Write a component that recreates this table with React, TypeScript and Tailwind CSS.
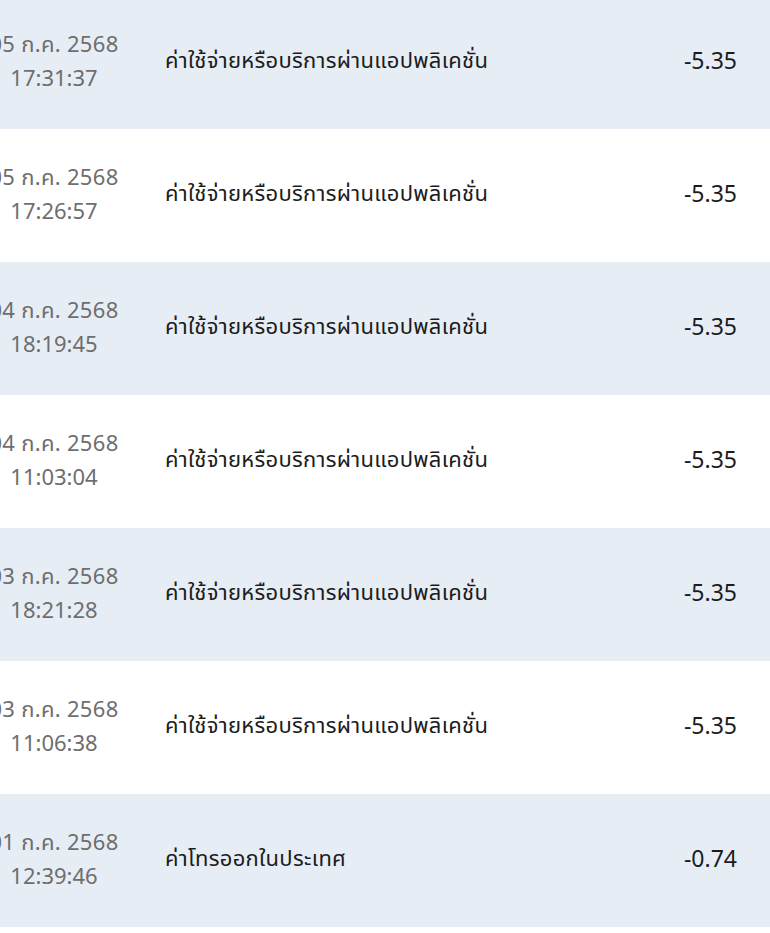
import React from "react";

const rows = [
  { d: "05 ก.ค. 2568", t: "17:31:37", desc: "ค่าใช้จ่ายหรือบริการผ่านแอปพลิเคชั่น", amt: "-5.35" },
  { d: "05 ก.ค. 2568", t: "17:26:57", desc: "ค่าใช้จ่ายหรือบริการผ่านแอปพลิเคชั่น", amt: "-5.35" },
  { d: "04 ก.ค. 2568", t: "18:19:45", desc: "ค่าใช้จ่ายหรือบริการผ่านแอปพลิเคชั่น", amt: "-5.35" },
  { d: "04 ก.ค. 2568", t: "11:03:04", desc: "ค่าใช้จ่ายหรือบริการผ่านแอปพลิเคชั่น", amt: "-5.35" },
  { d: "03 ก.ค. 2568", t: "18:21:28", desc: "ค่าใช้จ่ายหรือบริการผ่านแอปพลิเคชั่น", amt: "-5.35" },
  { d: "03 ก.ค. 2568", t: "11:06:38", desc: "ค่าใช้จ่ายหรือบริการผ่านแอปพลิเคชั่น", amt: "-5.35" },
  { d: "01 ก.ค. 2568", t: "12:39:46", desc: "ค่าโทรออกในประเทศ", amt: "-0.74" },
  { d: "30 มิ.ย. 2568", t: "10:00:00", desc: "ค่าใช้จ่ายหรือบริการผ่านแอปพลิเคชั่น", amt: "-5.35" },
];

export default function App() {
  return (
    <div
      className="w-[770px] h-[933px] overflow-hidden bg-white"
      style={{ fontFamily: '"Noto Sans Thai", "Noto Sans", Roboto, sans-serif' }}
    >
      <div className="-mt-[4px] flex flex-col">
        {rows.map((r, i) => (
          <div
            key={i}
            className={`flex h-[133px] items-center shrink-0 ${i % 2 === 0 ? "bg-[#e7edf4]" : "bg-white"}`}
          >
            <div className="-ml-[24px] w-[156px] shrink-0 flex flex-col items-center text-[22px] leading-[34px] text-[#6e6e6e]">
              <span className="whitespace-nowrap tracking-[0.3px]">{r.d}</span>
              <span>{r.t}</span>
            </div>
            <div className="ml-[33px] flex-1 text-[22px] leading-[30px] tracking-[0.28px] text-[#1c1c1c] whitespace-nowrap -mt-[1px]">{r.desc}</div>
            <div className="w-[120px] pr-[33px] text-right text-[23px] text-[#1c1c1c]">{r.amt}</div>
          </div>
        ))}
      </div>
    </div>
  );
}
